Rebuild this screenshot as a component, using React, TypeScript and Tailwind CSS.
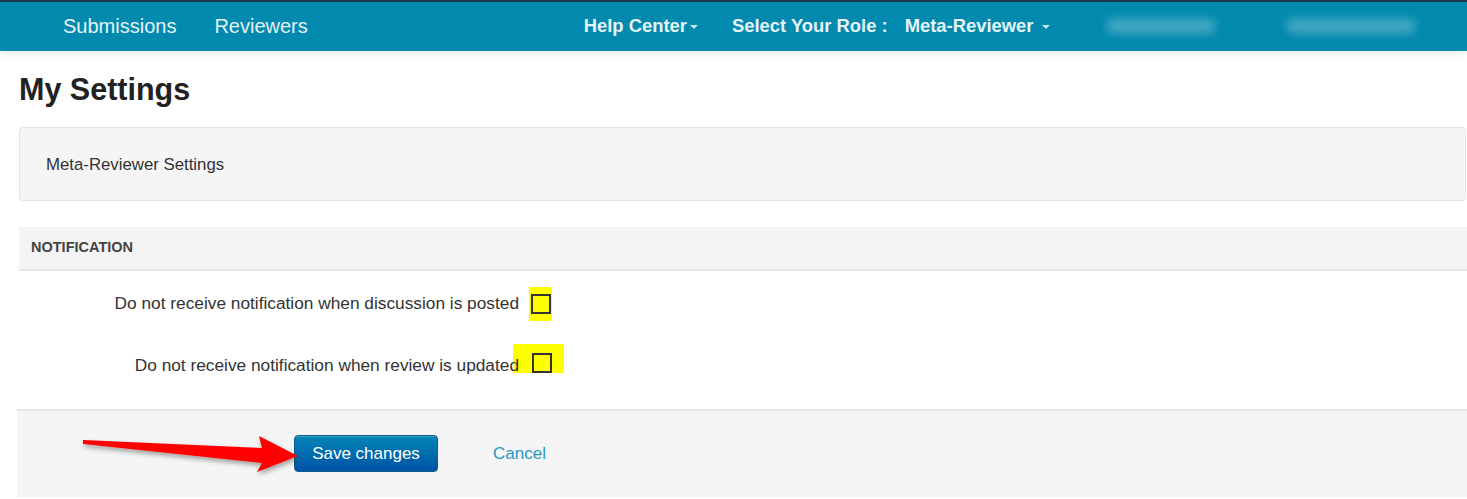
import { useState } from "react";

const font = { fontFamily: '"Liberation Sans", Arial, sans-serif' };

function Caret() {
  return <span className="inline-block ml-[3px] align-middle w-0 h-0 border-l-[4px] border-r-[4px] border-t-[4px] border-l-transparent border-r-transparent border-t-white/80" />;
}

function NavBar() {
  return (
    <div className="border-t-2 border-[#1d3a4c] bg-[#0189ae] h-[51px] shadow-[0_3px_6px_rgba(0,0,0,0.08)] relative z-10">
      <div className="flex items-center h-[48px] text-white/90">
        <div className="flex items-center gap-[38px] pl-[63px] text-[20px]">
          <span>Submissions</span>
          <span>Reviewers</span>
        </div>
        <div className="flex items-center font-bold ml-[276px] text-[18.4px]">
          <span>Help Center<Caret /></span>
          <span className="ml-[34px]">Select Your Role :</span>
          <span className="ml-[17px]">Meta-Reviewer <Caret /></span>
        </div>
        {/* names are blurred in the source */}
        <div className="flex items-center ml-[56px] gap-[70px]">
          <div className="w-[110px] h-[16px] rounded-full bg-white/25 blur-[5px]" />
          <div className="w-[130px] h-[16px] rounded-full bg-white/25 blur-[5px]" />
        </div>
      </div>
    </div>
  );
}

function Check({ wide }: { wide?: boolean }) {
  const [on, setOn] = useState(false);
  return (
    <span className={`flex bg-[#ffff00] ${wide ? "w-[51px] h-[29px] -ml-[6px] mb-[16px] pl-[19px] items-end" : "w-[23px] h-[34px] ml-[10px] items-center justify-center"}`}>
      <button
        onClick={() => setOn(!on)}
        className="w-[20px] h-[20px] border-2 border-[#333] bg-transparent flex items-center justify-center text-[13px] leading-none"
      >
        {on ? "✓" : ""}
      </button>
    </span>
  );
}

export default function App() {
  return (
    <div className="min-h-[499px] bg-white text-[#333]" style={font}>
      <NavBar />
      <div className="pl-[19px] pr-[1px]">
        <h1 className="text-[30.5px] font-bold leading-none mt-[23px] mb-[22px] text-[#222]">My Settings</h1>

        <div className="h-[74px] bg-[#f5f5f5] border border-[#e3e3e3] rounded-[4px] flex items-center pl-[26px] pt-[2px] text-[16.8px]">
          Meta-Reviewer Settings
        </div>

        <div className="mt-[26px] -mr-[1px] h-[44px] bg-[#f4f4f4] border-b-2 border-[#e6e6e6] flex items-center pl-[12px] text-[14.5px] font-bold text-[#444]">
          NOTIFICATION
        </div>

        <div className="text-[17.3px]">
          <div className="flex items-center h-[34px] mt-[16px]">
            <span className="w-[500px] text-right">Do not receive notification when discussion is posted</span>
            <Check />
          </div>
          <div className="flex items-center h-[45px] mt-[23px]">
            <span className="w-[500px] text-right relative z-10">Do not receive notification when review is updated</span>
            <Check wide />
          </div>
        </div>

        <div className="relative mt-[20px] -ml-[2px] -mr-[1px] h-[88px] bg-[#f5f5f5] border-t-2 border-[#e6e6e6] flex items-center">
          <button className="ml-[277px] w-[144px] h-[37px] rounded-[4px] border border-[#0b5c8f] bg-gradient-to-b from-[#0a86b6] to-[#0052a5] text-white text-[17px] shadow-[inset_0_1px_0_rgba(255,255,255,0.2)]">
            Save changes
          </button>
          <span className="ml-[55px] text-[17px] text-[#2a98c0]">Cancel</span>

          {/* annotation arrow */}
          <svg className="absolute left-0 top-0 pointer-events-none" width="320" height="88" viewBox="0 0 320 88">
            <defs>
              <filter id="sh" x="-10%" y="-30%" width="120%" height="160%">
                <feDropShadow dx="1" dy="3" stdDeviation="2.5" floodColor="#000" floodOpacity="0.35" />
              </filter>
            </defs>
            <polygon
              points="66,29 245,37 242,25 281,45 240,61 245,52 66,33"
              fill="#ff0000"
              filter="url(#sh)"
            />
          </svg>
        </div>
      </div>
    </div>
  );
}
